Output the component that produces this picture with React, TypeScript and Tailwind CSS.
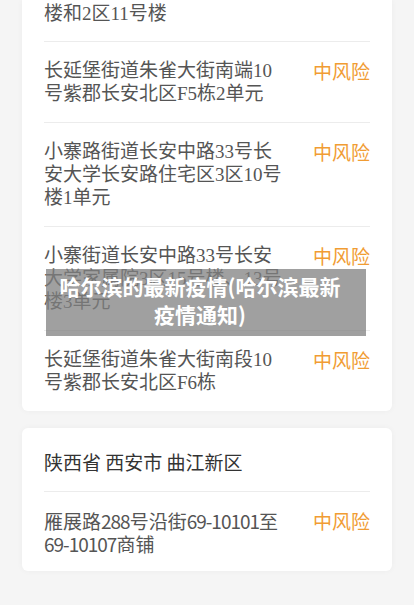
import React from "react";

const serif = { fontFamily: '"Liberation Serif", "Noto Sans CJK SC", serif' };
const sans = { fontFamily: '"Noto Sans CJK SC", sans-serif' };

function RiskRow({
  children,
  font,
  pb = "pb-[17px]",
}: {
  children: React.ReactNode;
  font: React.CSSProperties;
  pb?: string;
}) {
  return (
    <div className={`flex justify-between border-t border-[#ececec] pt-[17px] ${pb}`}>
      <div className="w-[240px] text-[19px] leading-[23px] text-[#555555]" style={font}>
        {children}
      </div>
      <div className="text-[19px] leading-[23px] text-[#f19c33]" style={sans}>
        中风险
      </div>
    </div>
  );
}

export default function App() {
  return (
    <div className="relative min-h-screen overflow-hidden bg-[#f5f5f5]">
      <div className="px-[22px]">
        <div className="rounded-b-md bg-white px-[22px] shadow-[0_0_6px_rgba(0,0,0,0.04)]">
          <div className="pt-[2px] pb-[16px] text-[19px] leading-[23px] text-[#555555]" style={serif}>
            楼和2区11号楼
          </div>
          <RiskRow font={serif}>长延堡街道朱雀大街南端10号紫郡长安北区F5栋2单元</RiskRow>
          <RiskRow font={serif}>小寨路街道长安中路33号长安大学长安路住宅区3区10号楼1单元</RiskRow>
          <RiskRow font={serif}>小寨街道长安中路33号长安大学家属院3区15号楼、13号楼3单元</RiskRow>
          <RiskRow font={serif}>长延堡街道朱雀大街南段10号紫郡长安北区F6栋</RiskRow>
        </div>
        <div className="mt-[17px] rounded-md bg-white px-[22px] shadow-[0_0_6px_rgba(0,0,0,0.04)]">
          <div className="pt-[22px] pb-[18px] text-[19px] leading-[23px] text-[#333333]" style={sans}>
            陕西省 西安市 曲江新区
          </div>
          <RiskRow font={sans} pb="pb-[16px]">
            雁展路<span className="tracking-[-1px]">288</span>号沿街
            <span className="tracking-[-1px]">69-10101</span>至
            <span className="tracking-[-1px]">69-10107</span>商铺
          </RiskRow>
        </div>
      </div>
      <div
        className="absolute left-[46px] top-[269px] flex h-[67px] w-[320px] items-start justify-center bg-[rgba(128,128,128,0.75)] pl-[6px] pr-[18px] pt-[3px] text-center text-[21px] font-bold leading-[28px] text-white"
        style={sans}
      >
        哈尔滨的最新疫情(哈尔滨最新疫情通知)
      </div>
    </div>
  );
}
